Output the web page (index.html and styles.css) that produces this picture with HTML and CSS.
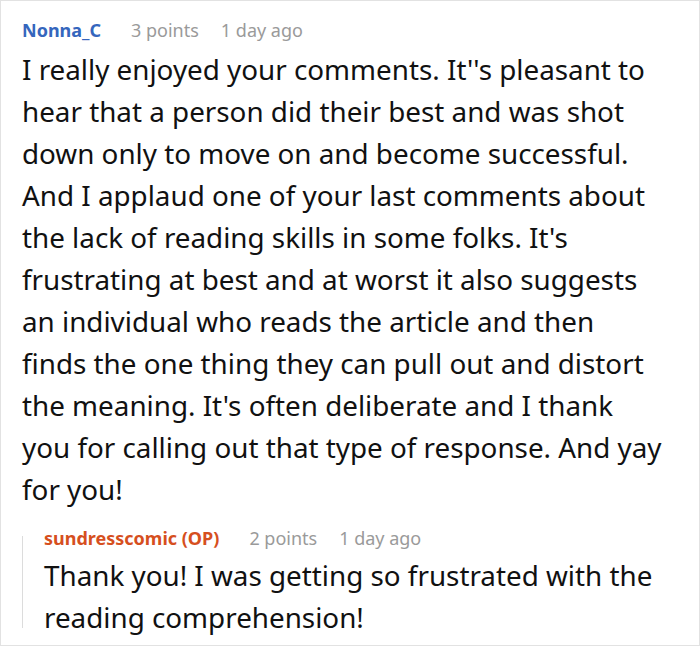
FILE: index.html
```html
<!DOCTYPE html>
<html>
<head>
<meta charset="utf-8">
<link rel="stylesheet" href="styles.css">
</head>
<body>
<div class="frame">
  <div class="comment">
    <div class="meta">
      <span class="author">Nonna_C</span>
      <span class="info">3 points</span>
      <span class="info">1 day ago</span>
    </div>
    <p class="text">I really enjoyed your comments. It''s pleasant to hear that a person did their best and was shot down only to move on and become successful. And I applaud one of your last comments about the lack of reading skills in some folks. It's frustrating at best and at worst it also suggests an individual who reads the article and then finds the one thing they can pull out and distort the meaning. It's often deliberate and I thank you for calling out that type of response. And yay for you!</p>
  </div>
  <div class="reply">
    <div class="rule"></div>
    <div class="reply-body">
      <div class="meta">
        <span class="author op">sundresscomic (OP)</span>
        <span class="info">2 points</span>
        <span class="info">1 day ago</span>
      </div>
      <p class="text">Thank you! I was getting so frustrated with the reading comprehension!</p>
    </div>
  </div>
</div>
</body>
</html>
```
FILE: styles.css
```css
html, body {
  margin: 0;
  padding: 0;
  background: #fff;
}
.frame {
  width: 700px;
  height: 646px;
  box-sizing: border-box;
  border: 1px solid #e2e2e2;
  padding: 17px 35px 0 21px;
  font-family: "Noto Sans", sans-serif;
  color: #111;
}
.meta {
  display: flex;
  gap: 22px;
  font-size: 18px;
  line-height: 24px;
  align-items: baseline;
}
.author {
  font-weight: bold;
  color: #3566bd;
  margin-right: 8px;
}
.author.op {
  color: #d64f1e;
}
.info {
  color: #9a9a9a;
}
.text {
  margin: 0;
  font-size: 27.8px;
  line-height: 42px;
}
.comment .text {
  margin-top: 6px;
}
.reply {
  display: flex;
  margin-top: 16px;
}
.rule {
  width: 1px;
  background: #dcdcdc;
  margin: 10px 0;
  flex: none;
}
.reply-body {
  padding-left: 21px;
}
.reply .text {
  margin-top: 4px;
}
```
